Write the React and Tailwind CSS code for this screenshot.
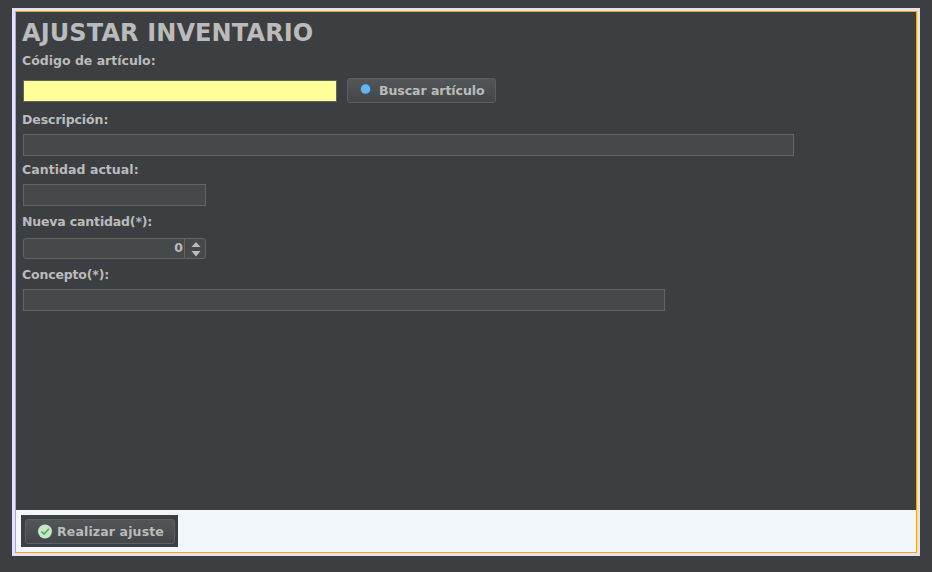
function Label({ className, children }) {
  return (
    <div className={`h-4 pl-[6px] text-[12.5px] leading-4 font-bold whitespace-nowrap ${className}`}>
      {children}
    </div>
  );
}

const field = "ml-[7px] border border-[#646464] bg-[#45494a]";
const button =
  "flex h-[25px] items-center rounded-[3px] border border-[#5c6062] bg-linear-to-b from-[#525658] to-[#434749] text-[12.5px] leading-4 font-bold whitespace-nowrap text-[#bbbbbb]";

function SearchIcon() {
  return (
    <svg width="16" height="16" viewBox="0 0 16 16" className="shrink-0">
      <path d="M10.5 10 L14 13.5" stroke="#37474f" strokeWidth="1" />
      <circle cx="7.5" cy="6" r="5.4" fill="#4a6070" />
      <circle cx="7.5" cy="6" r="4.7" fill="#64b5f6" />
    </svg>
  );
}

function CheckIcon() {
  return (
    <svg width="16" height="16" viewBox="0 0 16 16" className="shrink-0">
      <circle cx="8" cy="7.5" r="7" fill="#c8e6c9" />
      <path d="M4.4 7.5 L7 10.1 L12 4.8" fill="none" stroke="#4caf50" strokeWidth="1.5" />
    </svg>
  );
}

export default function App() {
  return (
    <div className="h-[572px] w-[932px] bg-[#3c3f41] pt-2 pl-3 font-['DejaVu_Sans',sans-serif] text-[#bbbbbb]">
      <div className="h-[548px] w-[908px] border-[3px] border-[#e0e0ff]">
        <div className="flex h-full flex-col border border-[#ffa500]">
          <main className="flex h-[498px] flex-col items-start">
            <h1 className="mt-[7px] h-7 pl-[6px] text-[24px] leading-7 font-bold tracking-[0.12px] whitespace-nowrap">
              AJUSTAR INVENTARIO
            </h1>
            <Label className="mt-[6px]">Código de artículo:</Label>
            <div className="mt-[9px] flex h-[25px]">
              <input className="mt-[2px] ml-[7px] h-[22px] w-[314px] border border-[#646464] bg-[#ffff99]" />
              <button className={`${button} ml-[10px] w-[149px] gap-[5px] pl-[10px] tracking-[-0.05px]`}>
                <SearchIcon />
                Buscar artículo
              </button>
            </div>
            <Label className="mt-[9px] tracking-[-0.08px]">Descripción:</Label>
            <input className={`${field} mt-[6px] h-[22px] w-[771px]`} />
            <Label className="mt-[6px] tracking-[0.05px]">Cantidad actual:</Label>
            <input className={`${field} mt-[6px] h-[22px] w-[183px]`} />
            <Label className="mt-2 tracking-[-0.16px]">Nueva cantidad(*):</Label>
            <div className={`${field} mt-[8px] flex h-[21px] w-[183px] rounded-[3px]`}>
              <div className="w-[161px] border-r border-[#646464] pr-[1px] text-right text-[12.5px] leading-[18px] font-bold">
                0
              </div>
              <svg width="20" height="19" viewBox="0 0 20 19" fill="#bbbbbb">
                <path d="M6.5 8 L11 3 L15.5 8 Z" />
                <path d="M6.5 12 L11 17.5 L15.5 12 Z" />
              </svg>
            </div>
            <Label className="mt-2 tracking-[-0.16px]">Concepto(*):</Label>
            <input className={`${field} mt-[6px] h-[22px] w-[642px]`} />
          </main>
          <footer className="flex-1 bg-[#f0f6fa] pt-[5px] pl-[5px]">
            <div className="h-8 w-[157px] bg-[#3c3f41] pt-1 pl-1">
              <button className={`${button} w-[150px] gap-[4px] pl-[11px] tracking-[0.14px]`}>
                <CheckIcon />
                Realizar ajuste
              </button>
            </div>
          </footer>
        </div>
      </div>
    </div>
  );
}
